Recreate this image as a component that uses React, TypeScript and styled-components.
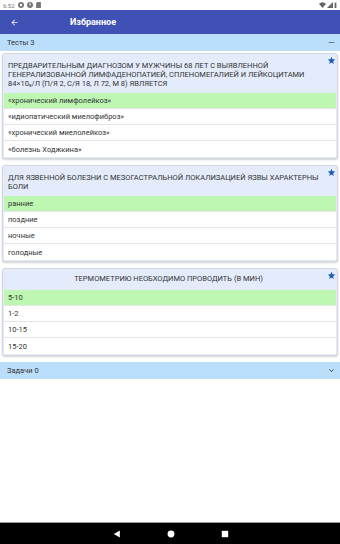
import React from "react";
import styled, { createGlobalStyle } from "styled-components";

const Global = createGlobalStyle`
  html, body { margin: 0; padding: 0; }
  body { font-family: Roboto, "Noto Sans", sans-serif; background: #fff; }
  #root { width: 340px; height: 544px; }
`;

const Screen = styled.div`
  width: 340px;
  height: 544px;
  display: flex;
  flex-direction: column;
  background: #fff;
  overflow: hidden;
`;

const StatusBar = styled.div`
  height: 10px;
  display: flex;
  align-items: center;
  justify-content: space-between;
  padding: 0 3px 0 3px;
  background: #fff;
  color: #777;
  font-size: 6px;
`;

const StatusLeft = styled.div`
  display: flex;
  align-items: center;
  gap: 3px;
`;

const StatusRight = styled.div`
  display: flex;
  align-items: center;
  gap: 1px;
`;

const AppBar = styled.div`
  height: 24px;
  background: #3f51b5;
  display: flex;
  align-items: center;
  color: #fff;
`;

const BackButton = styled.div`
  width: 24px;
  display: flex;
  justify-content: center;
  padding-left: 2px;
`;

const Title = styled.div`
  margin-left: 44px;
  font-size: 9px;
  font-weight: 700;
`;

const SectionHeader = styled.div`
  height: 17px;
  flex-shrink: 0;
  background: #bbdefb;
  display: flex;
  align-items: center;
  justify-content: space-between;
  padding: 0 5px 0 7px;
  font-size: 7.5px;
  color: #333;
`;

const List = styled.div`
  display: flex;
  flex-direction: column;
  gap: 6px;
  padding: 2px 2px 6px 2px;
`;

const Card = styled.div`
  position: relative;
  background: #e4ecfb;
  border: 1px solid #d3d8e0;
  border-radius: 3px;
  box-shadow: 0 1px 2px rgba(0, 0, 0, 0.18);
  padding: 0 1px 1px 1px;
`;

const StarMark = styled.div`
  position: absolute;
  top: 2px;
  right: 1px;
  line-height: 0;
`;

const Question = styled.div<{ $center?: boolean }>`
  padding: ${(p) => (p.$center ? "5px 7px 7px 4px" : "7px 8px 5px 4px")};
  font-size: 7.5px;
  line-height: 9px;
  color: #333;
  text-transform: uppercase;
  text-align: ${(p) => (p.$center ? "center" : "left")};
`;

const Answer = styled.div<{ $correct?: boolean }>`
  height: 16px;
  display: flex;
  align-items: center;
  padding-left: 4px;
  font-size: 7.5px;
  color: #333;
  background: ${(p) => (p.$correct ? "#bdf7b2" : "#fff")};
  border-bottom: 1px solid #e6e6e6;
  box-sizing: border-box;
  &:last-child { border-bottom: none; }
`;

const Spacer = styled.div`
  flex: 1;
`;

const NavBar = styled.div`
  height: 21px;
  flex-shrink: 0;
  background: #000;
  border-top: 1px solid #9e9e9e;
  display: flex;
  align-items: center;
  justify-content: center;
  gap: 46px;
  padding-left: 2px;
`;

const Star = () => (
  <svg width="9" height="9" viewBox="0 0 24 24">
    <path
      fill="#1b5fb0"
      d="M12 17.27L18.18 21l-1.64-7.03L22 9.24l-7.19-.61L12 2 9.19 8.63 2 9.24l5.46 4.73L5.82 21z"
    />
  </svg>
);

type Q = { text: string; answers: string[]; center?: boolean };

const questions: Q[] = [
  {
    text:
      "Предварительным диагнозом у мужчины 68 лет с выявленной генерализованной лимфаденопатией, спленомегалией и лейкоцитами 84×10₉/л (п/я 2, с/я 18, л 72, м 8) является",
    answers: [
      "«хронический лимфолейкоз»",
      "«идиопатический миелофиброз»",
      "«хронический миелолейкоз»",
      "«болезнь Ходжкина»",
    ],
  },
  {
    text: "Для язвенной болезни с мезогастральной локализацией язвы характерны боли",
    answers: ["ранние", "поздние", "ночные", "голодные"],
  },
  {
    text: "Термометрию необходимо проводить (в мин)",
    answers: ["5-10", "1-2", "10-15", "15-20"],
    center: true,
  },
];

export default function App() {
  return (
    <>
      <Global />
      <Screen>
        <StatusBar>
          <StatusLeft>
            <span>6:52</span>
            <svg width="6" height="6" viewBox="0 0 10 10">
              <circle cx="5" cy="5" r="5" fill="#777" />
              <circle cx="5" cy="5" r="2" fill="#fff" />
            </svg>
            <svg width="6" height="6" viewBox="0 0 10 10">
              <circle cx="5" cy="5" r="5" fill="#777" />
              <path d="M4 2h2v4H4z" fill="#fff" />
            </svg>
            <svg width="5" height="6" viewBox="0 0 8 10">
              <path d="M0 2L2 0h6v10H0z" fill="#777" />
            </svg>
          </StatusLeft>
          <StatusRight>
            <svg width="7" height="6" viewBox="0 0 12 10">
              <path d="M6 10L0 3a9 9 0 0 1 12 0z" fill="#666" />
            </svg>
            <svg width="6" height="6" viewBox="0 0 10 10">
              <path d="M10 0v10H0z" fill="#666" />
            </svg>
            <svg width="3" height="6" viewBox="0 0 5 10">
              <path d="M1 1h3v9H1z" fill="#666" />
            </svg>
          </StatusRight>
        </StatusBar>
        <AppBar>
          <BackButton>
            <svg width="9" height="9" viewBox="0 0 24 24">
              <path
                fill="#fff"
                d="M20 11H7.83l5.59-5.59L12 4l-8 8 8 8 1.41-1.41L7.83 13H20v-2z"
              />
            </svg>
          </BackButton>
          <Title>Избранное</Title>
        </AppBar>
        <SectionHeader>
          <span>Тесты 3</span>
          <svg width="7" height="7" viewBox="0 0 10 10">
            <path d="M1 5h8" stroke="#666" strokeWidth="1.2" />
          </svg>
        </SectionHeader>
        <List>
          {questions.map((q, i) => (
            <Card key={i}>
              <StarMark>
                <Star />
              </StarMark>
              <Question $center={q.center}>{q.text}</Question>
              {q.answers.map((a, j) => (
                <Answer key={j} $correct={j === 0}>
                  {a}
                </Answer>
              ))}
            </Card>
          ))}
        </List>
        <SectionHeader>
          <span>Задачи 0</span>
          <svg width="7" height="7" viewBox="0 0 10 10">
            <path d="M2 3.5l3 3 3-3" stroke="#444" strokeWidth="1.4" fill="none" />
          </svg>
        </SectionHeader>
        <Spacer />
        <NavBar>
          <svg width="8" height="8" viewBox="0 0 10 10">
            <path d="M8.5 0.5v9L1 5z" fill="#fff" />
          </svg>
          <svg width="8" height="8" viewBox="0 0 10 10">
            <circle cx="5" cy="5" r="4.3" fill="#fff" />
          </svg>
          <svg width="8" height="8" viewBox="0 0 10 10">
            <rect x="1" y="1" width="8" height="8" fill="#fff" />
          </svg>
        </NavBar>
      </Screen>
    </>
  );
}
